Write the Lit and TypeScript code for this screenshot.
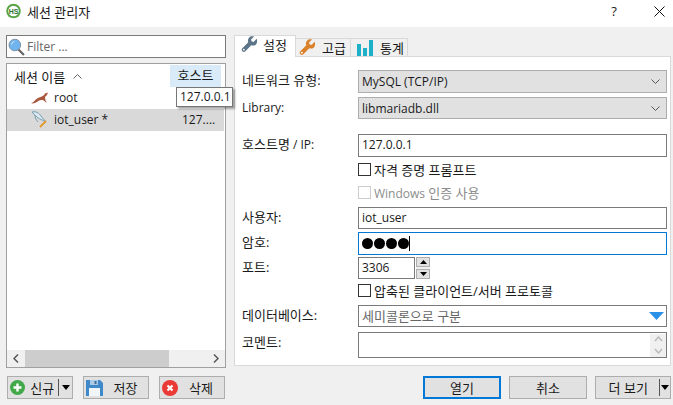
import { LitElement, html, css, svg } from "lit";
import { customElement } from "lit/decorators.js";

const wrench = (c: string) => svg`<svg width="17" height="17" viewBox="0 0 19 19"><path d="M17.500 3.200 14 6.600 11.800 6 11.200 3.900 14.600.6C12.500-.1 10.300.4 9 1.900 7.700 3.300 7.400 5.200 8.100 7L1.500 13.600C.5 14.600.5 16.100 1.500 17 2.500 18 4 18 4.900 17L11.500 10.400C13.300 11.100 15.300 10.700 16.700 9.400 18.100 8 18.400 5 17.500 3.200Z" fill="${c}"/><circle cx="3.200" cy="15.300" r="1" fill="#fff"/></svg>`;

@customElement("app-root")
export class AppRoot extends LitElement {
  static styles = css`
    :host { display: block; width: 673px; height: 405px; background: #f0f0f0; overflow: hidden;
      font-family: "Open Sans", "Noto Sans CJK KR", sans-serif; font-size: 12px; color: #1a1a1a; }
    * { box-sizing: border-box; }
    .ko { font-size: 13px; }
    .title { height: 27px; background: #fff; display: flex; align-items: center; padding: 0 0 5px 6px; gap: 6px; font-size: 13px; }
    .title .name { flex: 1; }
    .help { width: 20px; font-size: 13px; margin-right: 24px; text-align: center; }
    .close { margin-right: 8px; display: flex; }
    .main { display: flex; height: 341px; padding: 8px 0 0 6px; }
    .left { width: 220px; margin-right: 8px; display: flex; flex-direction: column; }
    .filter { height: 23px; width: 220px; border: 1px solid #7a7a7a; background: #fff; display: flex; align-items: center; padding-left: 1px; gap: 2px; color: #666; }
    .list { position: relative; margin-top: 5px; height: 305px; border: 1px solid #a0a0a0; background: #fff; padding-top: 1px; display: flex; flex-direction: column; }
    .head { height: 22px; display: flex; align-items: center; padding-left: 7px; font-size: 13px; }
    .head .sort { flex: 1; display: flex; align-items: center; gap: 8px; }
    .head .host { width: 51px; height: 22px; margin-right: 4px; background: #d9ebf9; text-align: center; line-height: 20px; }
    .row { height: 22px; display: flex; align-items: center; margin-right: 1px; padding-bottom: 1px; }
    .row.sel { background: #d9d9d9; }
    .row .ic { margin-left: 24px; width: 21px; display: flex; }
    .row .nm { margin-left: 2px; flex: 1; }
    .row .hs { width: 42px; }
    .tip { position: absolute; left: 169px; top: 23px; width: 57px; height: 20px; background: #fff; border: 1px solid #767676; box-shadow: 2px 2px 2px rgba(0,0,0,.35); line-height: 17px; padding-left: 3px; z-index: 2; }
    .spacer { flex: 1; }
    .hbar { height: 17px; background: #f0f0f0; display: flex; align-items: center; justify-content: space-between; padding: 0 6px; }
    .hbar .thumb { flex: 0 0 144px; height: 17px; background: #cdcdcd; margin: 0 auto 0 6px; }
    .right { width: 437px; display: flex; flex-direction: column; }
    .tabs { height: 21px; display: flex; align-items: flex-end; font-size: 13px; }
    .tab { height: 19px; border: 1px solid #d9d9d9; border-left-width: 0; background: #f0f0f0; display: flex; align-items: center; gap: 6px; margin-bottom: -1px; white-space: nowrap; }
    .tab.on { height: 22px; background: #fff; border-left-width: 1px; border-bottom: 0; padding: 0 0 4px 6px; width: 62px; gap: 5px; position: relative; z-index: 1; }
    .tab.a { width: 55px; padding-left: 3px; }
    .tab.b { width: 57px; padding-left: 6px; }
    .panel { height: 310px; border: 1px solid #d9d9d9; background: #fff; padding: 13px 4px 0 7px; display: grid; grid-template-columns: 116px 309px;
      grid-template-rows: 27px 37px 26px 23px 24px 25px 25px 24px 24px 27px 27px; align-items: start; }
    .lab { line-height: 21px; grid-column: 1; font-size: 13px; white-space: nowrap; }
    .lat { font-size: 12px; }
    .fld { grid-column: 2; height: 22px; border: 1px solid #7a7a7a; background: #fff; padding-left: 3px; line-height: 19px; }
    .fld.tall { height: 23px; }
    .sel2 { grid-column: 2; height: 23px; border: 1px solid #adadad; background: #e1e1e1; padding: 0 6px 0 3px; display: flex; align-items: center; justify-content: space-between; }
    .sel2.short { height: 22px; }
    .focus { border-color: #0078d7; height: 23px; display: flex; align-items: center; }
    .dot { width: 11px; height: 11px; background: #000; border-radius: 50%; }
    .dots { display: flex; gap: 1px; }
    .caret { width: 1px; height: 15px; background: #000; }
    .chk { grid-column: 2; display: flex; align-items: center; gap: 3px; height: 18px; }
    .box { width: 13px; height: 13px; border: 1px solid #333; background: #fff; }
    .dis { color: #8c8c8c; } .dis .box { border-color: #ccc; }
    .port { grid-column: 2; display: flex; gap: 1px; }
    .port .fld { width: 57px; }
    .spin { width: 14px; height: 22px; display: flex; flex-direction: column; justify-content: space-between; background: #f0f0f0; }
    .spin b { height: 10px; width: 14px; background: #e1e1e1; border: 1px solid #adadad; display: flex; align-items: center; justify-content: center; }
    .db { display: flex; align-items: center; justify-content: space-between; padding-right: 1px; color: #666; }
    .db svg { margin-right: 1px; }
    .memo { height: 26px; display: flex; justify-content: flex-end; align-items: center; padding-right: 0; }
    .sb { width: 16px; height: 23px; background: #f0f0f0; display: flex; flex-direction: column; align-items: center; justify-content: space-around; }
    .bottom { height: 37px; display: flex; align-items: flex-start; padding: 8px 2px 0 7px; font-size: 13px; }
    .btn { height: 23px; border: 1px solid #adadad; background: #e1e1e1; display: flex; align-items: center; justify-content: center; }
    .b66 { width: 66px; margin-right: 10px; }
    .b66.last { margin-right: 0; }
    .btn.ico { justify-content: flex-start; padding-left: 1px; }
    .btn.ico span { flex: 1; text-align: center; }
    .btn.ico svg { margin-left: 1px; }
    .b78 { width: 78px; margin-right: 8px; }
    .b76 { width: 76px; }
    .b76 span { flex: 1; text-align: center; padding-left: 2px; }
    .def { border: 2px solid #0078d7; }
    .sp { flex: 1; }
    .split { width: 1.500px; height: 17px; background: #555; }
    .drop { width: 0; height: 0; border: 4.500px solid transparent; border-top: 5px solid #000; border-bottom: 0; margin: 0 1px 0 1px; }
    .new .split { margin-left: 0; }
    .new .drop { margin: 0 2px 0 3px; }
    .new span { padding-left: 2px; }
  `;

  chev() {
    return svg`<svg width="9" height="5" viewBox="0 0 9 5"><path d="M.5.5l4 4 4-4" stroke="#555" fill="none"/></svg>`;
  }

  render() {
    return html`
      <div class="title">
        <svg width="15" height="16" viewBox="0 0 14 15"><circle cx="7" cy="7.500" r="6.800" fill="#58a445"/><circle cx="7" cy="7.500" r="5" fill="#fff"/><text x="7" y="10" font-size="6.500" font-weight="700" text-anchor="middle" fill="#2e6f2a" font-family="Liberation Sans">HS</text></svg>
        <span class="name">세션 관리자</span>
        <span class="help">?</span>
        <span class="close"><svg width="11" height="11" viewBox="0 0 11 11"><path d="M.5.5l10 10M10.500.5l-10 10" stroke="#111" fill="none"/></svg></span>
      </div>
      <div class="main">
        <div class="left">
          <div class="filter">
            <svg width="17" height="18" viewBox="0 0 17 18"><path d="M10 11l6 6" stroke="#666" stroke-width="2.200"/><circle cx="6.800" cy="7" r="5.800" fill="#6fb4ee" stroke="#7e92a5"/><path d="M3.500 6.500a3.500 3.500 0 0 1 3-3" stroke="#d5ebfb" fill="none"/></svg>
            <span>Filter ...</span>
          </div>
          <div class="list">
            <div class="head">
              <span class="sort">세션 이름 <svg width="9" height="5" viewBox="0 0 9 5"><path d="M.5 4.500l4-4 4 4" stroke="#666" fill="none"/></svg></span>
              <span class="host">호스트</span>
            </div>
            <div class="tip">127.0.0.1</div>
            <div class="row">
              <span class="ic"><svg width="18" height="12" viewBox="0 0 18 12"><path d="M0 11C3 11 3 8 7 6 10 4.500 12 5 14 1.500L17 .5 16 3 14 5C14 8 15 9 16 11L12 8C10 8 8 8 6 10 4 11 2 12 0 11Z" fill="#a8573d"/></svg></span>
              <span class="nm">root</span><span class="hs"></span>
            </div>
            <div class="row sel">
              <span class="ic"><svg width="18" height="17" viewBox="0 0 18 17"><path d="M1 1C5 0 8 2 10 5L15 11C13 10 12 9 11 9 8 8 4 5 1 1Z" fill="#dbe7ec" stroke="#5d8fa8" stroke-width=".8"/><path d="M4 4C4 7 5 9 7 11" stroke="#5d8fa8" stroke-width=".8" fill="none"/><path d="M9 16l6-6" stroke="#e09a2b" stroke-width="1.800"/></svg></span>
              <span class="nm">iot_user *</span><span class="hs">127....</span>
            </div>
            <div class="spacer"></div>
            <div class="hbar">
              <svg width="6" height="9" viewBox="0 0 6 9"><path d="M5 .5l-4 4 4 4" stroke="#555" stroke-width="1.500" fill="none"/></svg>
              <span class="thumb"></span>
              <svg width="6" height="9" viewBox="0 0 6 9"><path d="M1 .5l4 4-4 4" stroke="#555" stroke-width="1.500" fill="none"/></svg>
            </div>
          </div>
        </div>
        <div class="right">
          <div class="tabs">
            <div class="tab on">${wrench("#5b7487")}설정</div>
            <div class="tab a">${wrench("#d9822b")}고급</div>
            <div class="tab b"><svg width="17" height="17" viewBox="0 0 17 17"><path d="M0 5h4v12H0zM6 9h4v8H6zM12 1h4v16h-4z" fill="#1fb0c9"/></svg>통계</div>
          </div>
          <div class="panel">
            <div class="lab">네트워크 유형:</div>
            <div class="sel2">MySQL (TCP/IP)${this.chev()}</div>
            <div class="lab lat">Library:</div>
            <div class="sel2 short">libmariadb.dll${this.chev()}</div>
            <div class="lab">호스트명<span class="lat"> / IP:</span></div>
            <div class="fld tall">127.0.0.1</div>
            <div class="chk ko"><span class="box"></span>자격 증명 프롬프트</div>
            <div class="chk dis"><span class="box"></span><span>Windows <span class="ko">인증 사용</span></span></div>
            <div class="lab">사용자:</div>
            <div class="fld">iot_user</div>
            <div class="lab">암호:</div>
            <div class="fld focus"><span class="dots"><i class="dot"></i><i class="dot"></i><i class="dot"></i><i class="dot"></i></span><i class="caret"></i></div>
            <div class="lab">포트:</div>
            <div class="port"><div class="fld">3306</div>
              <div class="spin"><b><svg width="7" height="4" viewBox="0 0 7 4"><path d="M3.500 0l3.500 4H0z"/></svg></b><b><svg width="7" height="4" viewBox="0 0 7 4"><path d="M0 0h7L3.500 4z"/></svg></b></div></div>
            <div class="chk ko"><span class="box"></span>압축된 클라이언트/서버 프로토콜</div>
            <div class="lab">데이터베이스:</div>
            <div class="fld db ko">세미콜론으로 구분<svg width="15" height="8" viewBox="0 0 15 8"><path d="M0 0h15L7.500 8z" fill="#2b90e8"/></svg></div>
            <div class="lab">코멘트:</div>
            <div class="fld memo"><span class="sb"><svg width="9" height="6" viewBox="0 0 9 6"><path d="M1 5l3.500-4 3.500 4" stroke="#bbb" stroke-width="1.500" fill="none"/></svg><svg width="9" height="6" viewBox="0 0 9 6"><path d="M1 1l3.500 4 3.500-4" stroke="#bbb" stroke-width="1.500" fill="none"/></svg></span></div>
          </div>
        </div>
      </div>
      <div class="bottom">
        <div class="btn b66 ico new"><svg width="15" height="15" viewBox="0 0 15 15"><circle cx="7.500" cy="7.500" r="7.500" fill="#43a84a"/><path d="M7.500 3.500v8M3.500 7.500h8" stroke="#fff" stroke-width="2.400"/></svg><span>신규</span><i class="split"></i><i class="drop"></i></div>
        <div class="btn b66 ico"><svg width="17" height="17" viewBox="0 0 17 17"><path d="M0 1h14l3 3v13H0z" fill="#3f88c9"/><path d="M4 1h8v5H4z" fill="#a9c9e6"/><path d="M8.500 2h2v3h-2z" fill="#3f6f9a"/><path d="M3 9h11v8H3z" fill="#f1f6fb"/></svg><span>저장</span></div>
        <div class="btn b66 ico last"><svg width="16" height="16" viewBox="0 0 16 16"><circle cx="8" cy="8" r="8" fill="#ea3a35"/><path d="M5.500 5.500l5 5M10.500 5.500l-5 5" stroke="#fff" stroke-width="2.200"/></svg><span>삭제</span></div>
        <div class="sp"></div>
        <div class="btn b78 def">열기</div>
        <div class="btn b78">취소</div>
        <div class="btn b76"><span>더 보기</span><i class="split"></i><i class="drop"></i></div>
      </div>
    `;
  }
}
